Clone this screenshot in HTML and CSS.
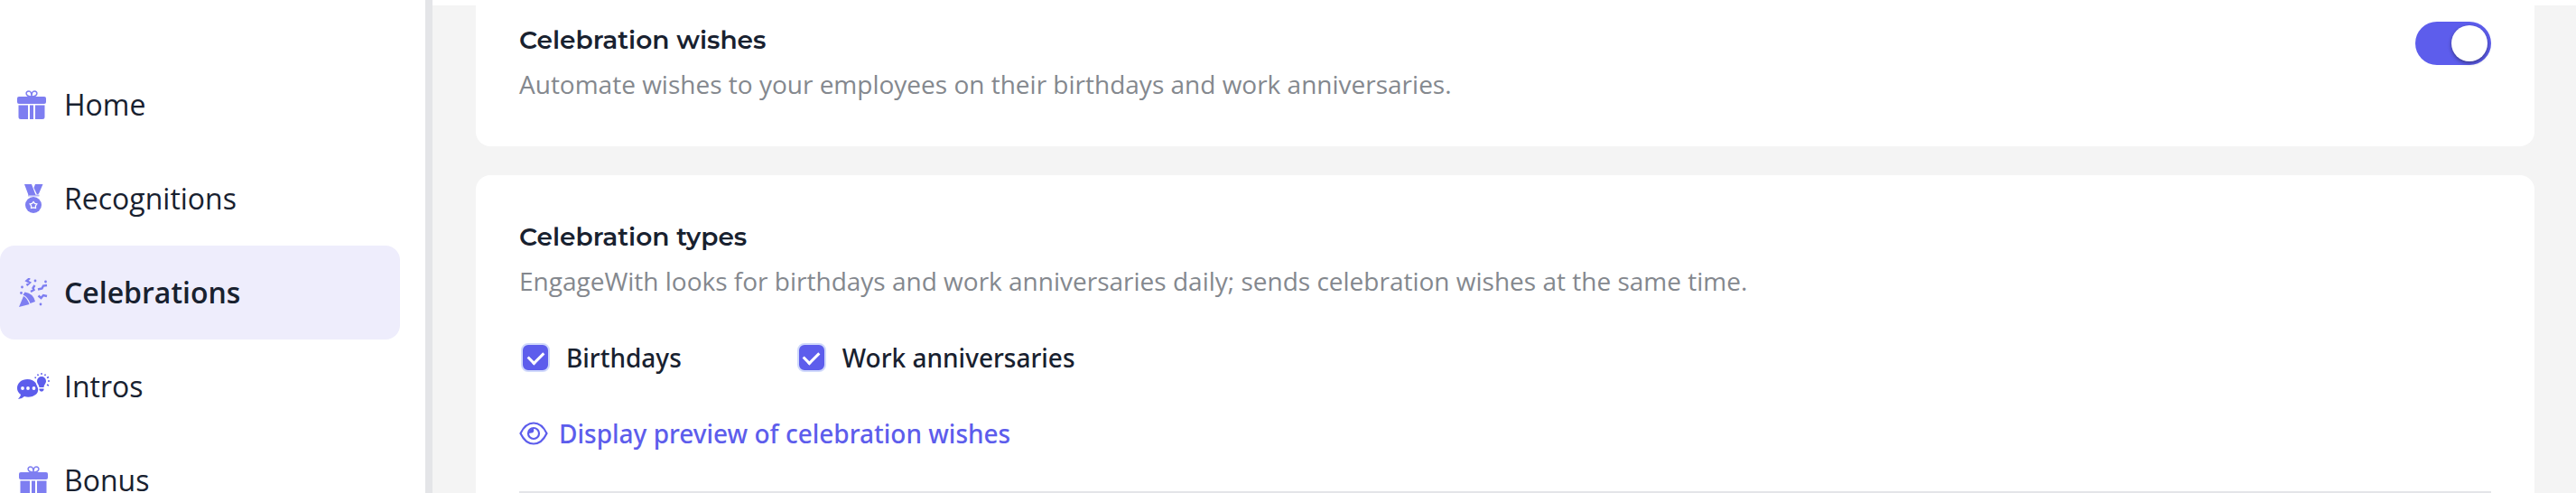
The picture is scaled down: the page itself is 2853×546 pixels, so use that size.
FILE: index.html
```
<!DOCTYPE html>
<html lang="en">
<head>
    <meta charset="UTF-8">
    <meta name="viewport" content="width=device-width, initial-scale=1.0">
    <title>Celebrations</title>
    <link rel="stylesheet" href="styles.css">
</head>
<body>
    <svg class="sprite" aria-hidden="true">
        <symbol id="gift" viewBox="0 0 32 32">
            <path d="M16 7C9 7 8.500 1 13 1C15.500 1 16 4 16 7C16 4 16.500 1 19 1C23.500 1 23 7 16 7" fill="none" stroke="currentColor" stroke-width="1.500"/>
            <rect x="0" y="7" width="32" height="8" rx="2"/>
            <path d="M1.500 16.500H12V32H4a2.500 2.500 0 0 1-2.500-2.500ZM14 16.500H18V32H14ZM20 16.500H30.500V29.500A2.500 2.500 0 0 1 28 32H20Z"/>
        </symbol>
    </svg>
    <nav class="sidebar">
        <a href="#" class="nav-item">
            <svg class="nav-icon" viewBox="0 0 36 32"><use href="#gift" width="32" height="32"/></svg>
            Home
        </a>
        <a href="#" class="nav-item">
            <svg class="nav-icon" viewBox="0 0 36 32">
                <path d="M8 0H16L20.500 12H12.500ZM20 0H28.500L24 10.500L22 11.500L18.500 4Z"/>
                <path d="M12 12.500H24.500" fill="none" stroke="currentColor" stroke-opacity=".6" stroke-width="2"/>
                <circle cx="18" cy="23" r="9"/>
                <path d="M18 19.500L19.500 21.500L21.800 22L20.400 24L20.500 26.500L18 25.800L15.500 26.500L15.600 24L14.200 22L16.500 21.500Z" fill="none" stroke="#fff" stroke-width="1.300"/>
            </svg>
            Recognitions
        </a>
        <a href="#" class="nav-item active">
            <svg class="nav-icon" viewBox="0 0 36 32">
                <path d="M2 32L7 20Q11 22 13.500 29ZM8.500 15.500Q18 17 20 26L14.500 28Q12 21 6.500 18.500Z"/>
                <path d="M14 0L10.500 3L14 5L10.500 8M19.500 8L17.500 11L18.500 13L15 15M33 8L29 8.500L27.500 11.500L23 12.500M33 20L29 19L26.500 22L23.500 19.500" fill="none" stroke="currentColor" stroke-width="2.400"/>
                <circle cx="20" cy="3" r="1.400"/><circle cx="31.500" cy="4" r="1.400"/><circle cx="5.500" cy="10" r="1.400"/><circle cx="4.500" cy="16.500" r="1.400"/><circle cx="26" cy="29" r="1.400"/>
            </svg>
            Celebrations
        </a>
        <a href="#" class="nav-item">
            <svg class="nav-icon nav-icon-dark" viewBox="0 0 36 32">
                <path d="M11.500 8C5 8 0 12 0 18Q0 22 4 25Q4 27 1 30Q5 30 8 27Q12 28.500 17 27C21 25.500 24 22.500 23 18L20.500 12Q17 8 11.500 8Z"/>
                <g fill="#fff"><circle cx="6" cy="18" r="1.900"/><circle cx="12" cy="18" r="1.900"/><circle cx="18.500" cy="18" r="1.900"/></g>
                <path d="M27 5a5 5 0 0 1 5 5c0 3-2 3.500-2.500 7H24.500C24 13.500 22 13 22 10a5 5 0 0 1 5-5ZM24.500 18.500H29.500V20L28 21.500H26L24.500 20Z"/>
                <path d="M27 1V3M22.500 2.500L23.500 4M31.500 2.500L30.500 4M19.500 6L21 6.500M35 5.500L33 6.500M34 10H36M33 14L35 15" fill="none" stroke="currentColor" stroke-width="1.400"/>
            </svg>
            Intros
        </a>
        <a href="#" class="nav-item">
            <svg class="nav-icon" viewBox="0 0 36 32"><use href="#gift" x="2" width="32" height="32"/></svg>
            Bonus
        </a>
    </nav>
    <main class="content">
        <section class="card card-first">
            <div>
                <h2 id="wishes-title">Celebration wishes</h2>
                <p>Automate wishes to your employees on their birthdays and work anniversaries.</p>
            </div>
            <input type="checkbox" role="switch" class="toggle" aria-labelledby="wishes-title" checked>
        </section>
        <section class="card">
            <h2>Celebration types</h2>
            <p>EngageWith looks for birthdays and work anniversaries daily; sends celebration wishes at the same time.</p>
            <div class="types">
                <label><input type="checkbox" class="check" checked>Birthdays</label>
                <label><input type="checkbox" class="check" checked>Work anniversaries</label>
            </div>
            <a href="#" class="preview">
                <svg class="eye" viewBox="0 0 32 26" fill="none" stroke="currentColor" stroke-width="2.200">
                    <path d="M1.500 13Q7 1.500 16 1.500T30.500 13Q25 24.500 16 24.500T1.500 13Z"/>
                    <circle cx="16" cy="13" r="6"/>
                    <path d="M10.500 13Q11 8 16 7.500Q17 12.500 13.500 12.500Q12 12.500 10.500 13Z" fill="currentColor" stroke="none"/>
                </svg>
                Display preview of celebration wishes
            </a>
            <hr>
        </section>
    </main>
</body>
</html>
```
FILE: styles.css
```
* {
    box-sizing: border-box;
}
body {
    font-family: "Open Sans", sans-serif;
    display: flex;
    height: 100vh;
    margin: 0;
    overflow: hidden;
    color: #18212f;
    background-color: white;
}
.sprite {
    display: none;
}
.sidebar {
    flex: 0 0 479px;
    padding: 64px 28px 0 0;
    border-right: 8px solid #e4e5e8;
}
.nav-item {
    display: flex;
    align-items: center;
    gap: 16px;
    height: 104px;
    padding-left: 19px;
    border-radius: 16px;
    font-size: 32px;
    line-height: 42px;
    color: #18212f;
    text-decoration: none;
}
.nav-item.active {
    background-color: #eeedfc;
    font-weight: 600;
}
.nav-icon {
    width: 36px;
    height: 32px;
    color: #7e7ef1;
    fill: currentColor;
}
.nav-icon-dark {
    color: #5d5dec;
}
.content {
    flex: 1;
    margin-top: 6px;
    padding: 0 46px 0 48px;
    background-color: #f4f4f4;
}
.card {
    margin-bottom: 32px;
    padding: 48px;
    border-radius: 16px;
    background-color: white;
}
.card-first {
    display: flex;
    justify-content: space-between;
    align-items: flex-start;
    padding-top: 18px;
    border-radius: 0 0 16px 16px;
}
h2 {
    margin: 0 0 8px;
    font-family: Montserrat, "Open Sans", sans-serif;
    font-size: 28px;
    font-weight: 600;
    line-height: 40px;
}
p {
    margin: 0;
    font-size: 28px;
    line-height: 42px;
    color: #84888e;
}
.toggle {
    appearance: none;
    width: 84px;
    height: 48px;
    margin: 0;
    padding: 4px;
    border-radius: 24px;
    background-color: #5d5dec;
}
.toggle::before {
    content: "";
    display: block;
    width: 40px;
    height: 40px;
    border-radius: 50%;
    background-color: white;
    box-shadow: 0 2px 4px rgba(0, 0, 0, 0.4);
}
.toggle:checked::before {
    margin-left: auto;
}
.types {
    display: flex;
    gap: 126px;
    margin-top: 43px;
}
label {
    display: flex;
    align-items: center;
    gap: 18px;
    padding-left: 2px;
    font-family: "Noto Sans", "Open Sans", sans-serif;
    font-size: 28px;
    font-weight: 500;
    line-height: 42px;
}
.check {
    appearance: none;
    width: 32px;
    height: 32px;
    margin: 0;
    border: 2px solid #d0d9fb;
    border-radius: 8px;
    background-color: #5d5dec;
}
.check:checked::before {
    content: "";
    display: block;
    width: 8px;
    height: 14px;
    margin: 4px auto;
    border: solid white;
    border-width: 0 3px 3px 0;
    transform: rotate(45deg);
}
.preview {
    display: flex;
    align-items: center;
    gap: 12px;
    margin-top: 42px;
    font-family: "Noto Sans", "Open Sans", sans-serif;
    font-size: 28px;
    font-weight: 500;
    line-height: 42px;
    color: #5d5dec;
    text-decoration: none;
}
.eye {
    width: 32px;
    height: 26px;
}
hr {
    margin: 43px 0 0;
    border: 0;
    border-top: 2px solid #e4e5e8;
}
```
